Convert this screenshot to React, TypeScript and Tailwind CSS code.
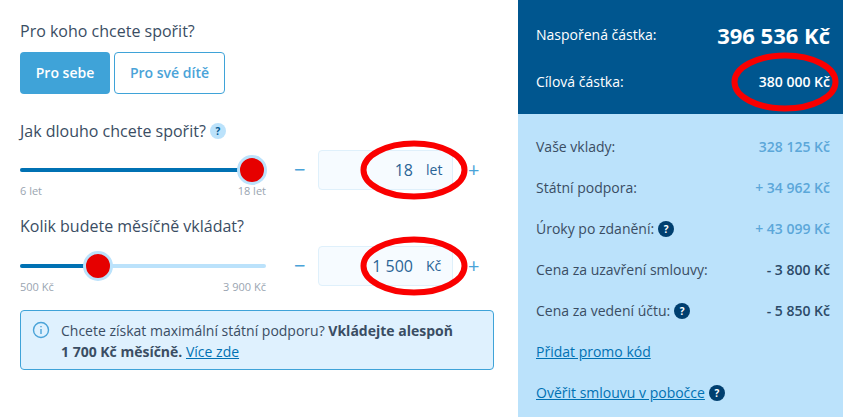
const font = { fontFamily: '"Open Sans", sans-serif' };

const HelpDot = ({ light }: { light?: boolean }) => (
  <span
    className={
      light
        ? 'inline-flex items-center justify-center w-4 h-4 rounded-full bg-[#bbe2fb] text-[#00568f] text-[10px] font-bold leading-none'
        : 'inline-flex items-center justify-center w-4 h-4 rounded-full bg-[#003f6f] text-white text-[10px] font-bold leading-none'
    }
  >
    ?
  </span>
);

const Slider = ({ pos, from, to }: { pos: number; from: string; to: string }) => (
  <div className="w-[246px]">
    <div className="relative h-[30px] flex items-center">
      <div className="w-full h-1 rounded-full bg-[#bbe2fb] overflow-hidden">
        <div className="h-1 bg-[#0071b3]" style={{ width: pos }} />
      </div>
      <div
        className="absolute top-0 w-[30px] h-[30px] rounded-full bg-[#e60000] border-[3px] border-[#bbe2fb]"
        style={{ left: pos - 15 }}
      />
    </div>
    <div className="flex justify-between text-[11px] leading-[14px] text-[#9aa5b1] -mt-px">
      <span>{from}</span>
      <span>{to}</span>
    </div>
  </div>
);

const Stepper = ({ value, unit }: { value: string; unit: string }) => (
  <div className="flex items-center ml-[28px] -mt-[5px] text-[#4aa3d8]">
    <span className="w-[24px] text-[20px] leading-none">−</span>
    <div className="w-[135px] h-10 rounded bg-[#f6fbff] border border-[#dff0fb] flex items-center justify-end text-[#2a6496]">
      <span className="text-base">{value}</span>
      <span className="w-[39px] pl-[13px] text-sm">{unit}</span>
    </div>
    <span className="ml-[15px] text-[20px] leading-none">+</span>
  </div>
);

const Row = ({ label, value, valueClass, help }: { label: string; value: string; valueClass: string; help?: boolean }) => (
  <div className="flex items-center justify-between h-[41px] text-sm text-[#3a4d63]">
    <span className="flex items-center gap-1">
      {label}
      {help && <HelpDot />}
    </span>
    <span className={valueClass}>{value}</span>
  </div>
);

const Ring = ({ className }: { className: string }) => (
  <svg className={'absolute w-[108px] h-[60px] ' + className} viewBox="0 0 108 60">
    <ellipse cx="54" cy="30" rx="50.5" ry="26.5" fill="none" stroke="#fa0000" strokeWidth="6" />
  </svg>
);

export default function App() {
  return (
    <div className="relative w-[843px] h-[417px] flex bg-white overflow-hidden" style={font}>
      <div className="w-[518px] pl-5 pr-6 pt-[19px]">
        <h3 className="text-base leading-6 text-[#3a4d63]">Pro koho chcete spořit?</h3>
        <div className="flex gap-1 mt-[9px]">
          <button className="w-[90px] h-[42px] rounded bg-[#3fa3d8] text-white text-sm font-semibold">Pro sebe</button>
          <button className="w-[111px] h-[42px] rounded border border-[#3fa3d8] text-[#4aa3d8] text-sm font-semibold">Pro své dítě</button>
        </div>

        <h3 className="flex items-center gap-1 text-base leading-6 text-[#3a4d63] mt-[25px]">
          Jak dlouho chcete spořit? <HelpDot light />
        </h3>
        <div className="flex items-start mt-[12px]">
          <Slider pos={232} from="6 let" to="18 let" />
          <Stepper value="18" unit="let" />
        </div>

        <h3 className="text-base leading-6 text-[#3a4d63] mt-[16px]">Kolik budete měsíčně vkládat?</h3>
        <div className="flex items-start mt-[13px]">
          <Slider pos={78} from="500 Kč" to="3 900 Kč" />
          <Stepper value="1 500" unit="Kč" />
        </div>

        <div className="mt-[16px] h-[60px] w-[474px] flex gap-[11px] rounded border border-[#3fa3d8] bg-[#dff1fe] pl-[11px] pt-[9px] text-sm leading-[21px] text-[#3a4d63]">
          <svg className="w-[18px] h-[18px] mt-[1px] shrink-0" viewBox="0 0 18 18" fill="none" stroke="#4aa3d8" strokeWidth="1.4">
            <circle cx="9" cy="9" r="7.5" />
            <path d="M9 8v5M9 5v1.3" />
          </svg>
          <p>
            Chcete získat maximální státní podporu? <b className="font-bold">Vkládejte alespoň</b>
            <br />
            <b className="font-bold">1 700 Kč měsíčně.</b> <a className="text-[#0071b3] underline">Více zde</a>
          </p>
        </div>
      </div>

      <div className="w-[325px] flex flex-col bg-[#bbe2fb]">
        <div className="h-[114px] bg-[#00568f] pl-[18px] pr-[13px] pt-[15px] text-white">
          <div className="flex items-center justify-between h-10">
            <span className="text-sm">Naspořená částka:</span>
            <span className="text-[22px] font-bold">396 536 Kč</span>
          </div>
          <div className="flex items-center justify-between h-10 mt-[7px]">
            <span className="text-sm">Cílová částka:</span>
            <span className="text-sm font-semibold">380 000 Kč</span>
          </div>
        </div>
        <div className="pl-[18px] pr-[13px] pt-[12px]">
          <Row label="Vaše vklady:" value="328 125 Kč" valueClass="font-semibold text-[#5ba7d9]" />
          <Row label="Státní podpora:" value="+ 34 962 Kč" valueClass="font-semibold text-[#5ba7d9]" />
          <Row label="Úroky po zdanění:" value="+ 43 099 Kč" valueClass="font-semibold text-[#5ba7d9]" help />
          <Row label="Cena za uzavření smlouvy:" value="- 3 800 Kč" valueClass="font-semibold text-[#2c4a68]" />
          <Row label="Cena za vedení účtu:" value="- 5 850 Kč" valueClass="font-semibold text-[#2c4a68]" help />
          <div className="h-[41px] flex items-center text-sm">
            <a className="text-[#0071b3] underline">Přidat promo kód</a>
          </div>
          <div className="h-[41px] flex items-center gap-1 text-sm">
            <a className="text-[#0071b3] underline">Ověřit smlouvu v pobočce</a>
            <HelpDot />
          </div>
        </div>
      </div>

      <Ring className="left-[360px] top-[140px]" />
      <Ring className="left-[360px] top-[236px]" />
      <Ring className="left-[731px] top-[52px]" />
    </div>
  );
}
